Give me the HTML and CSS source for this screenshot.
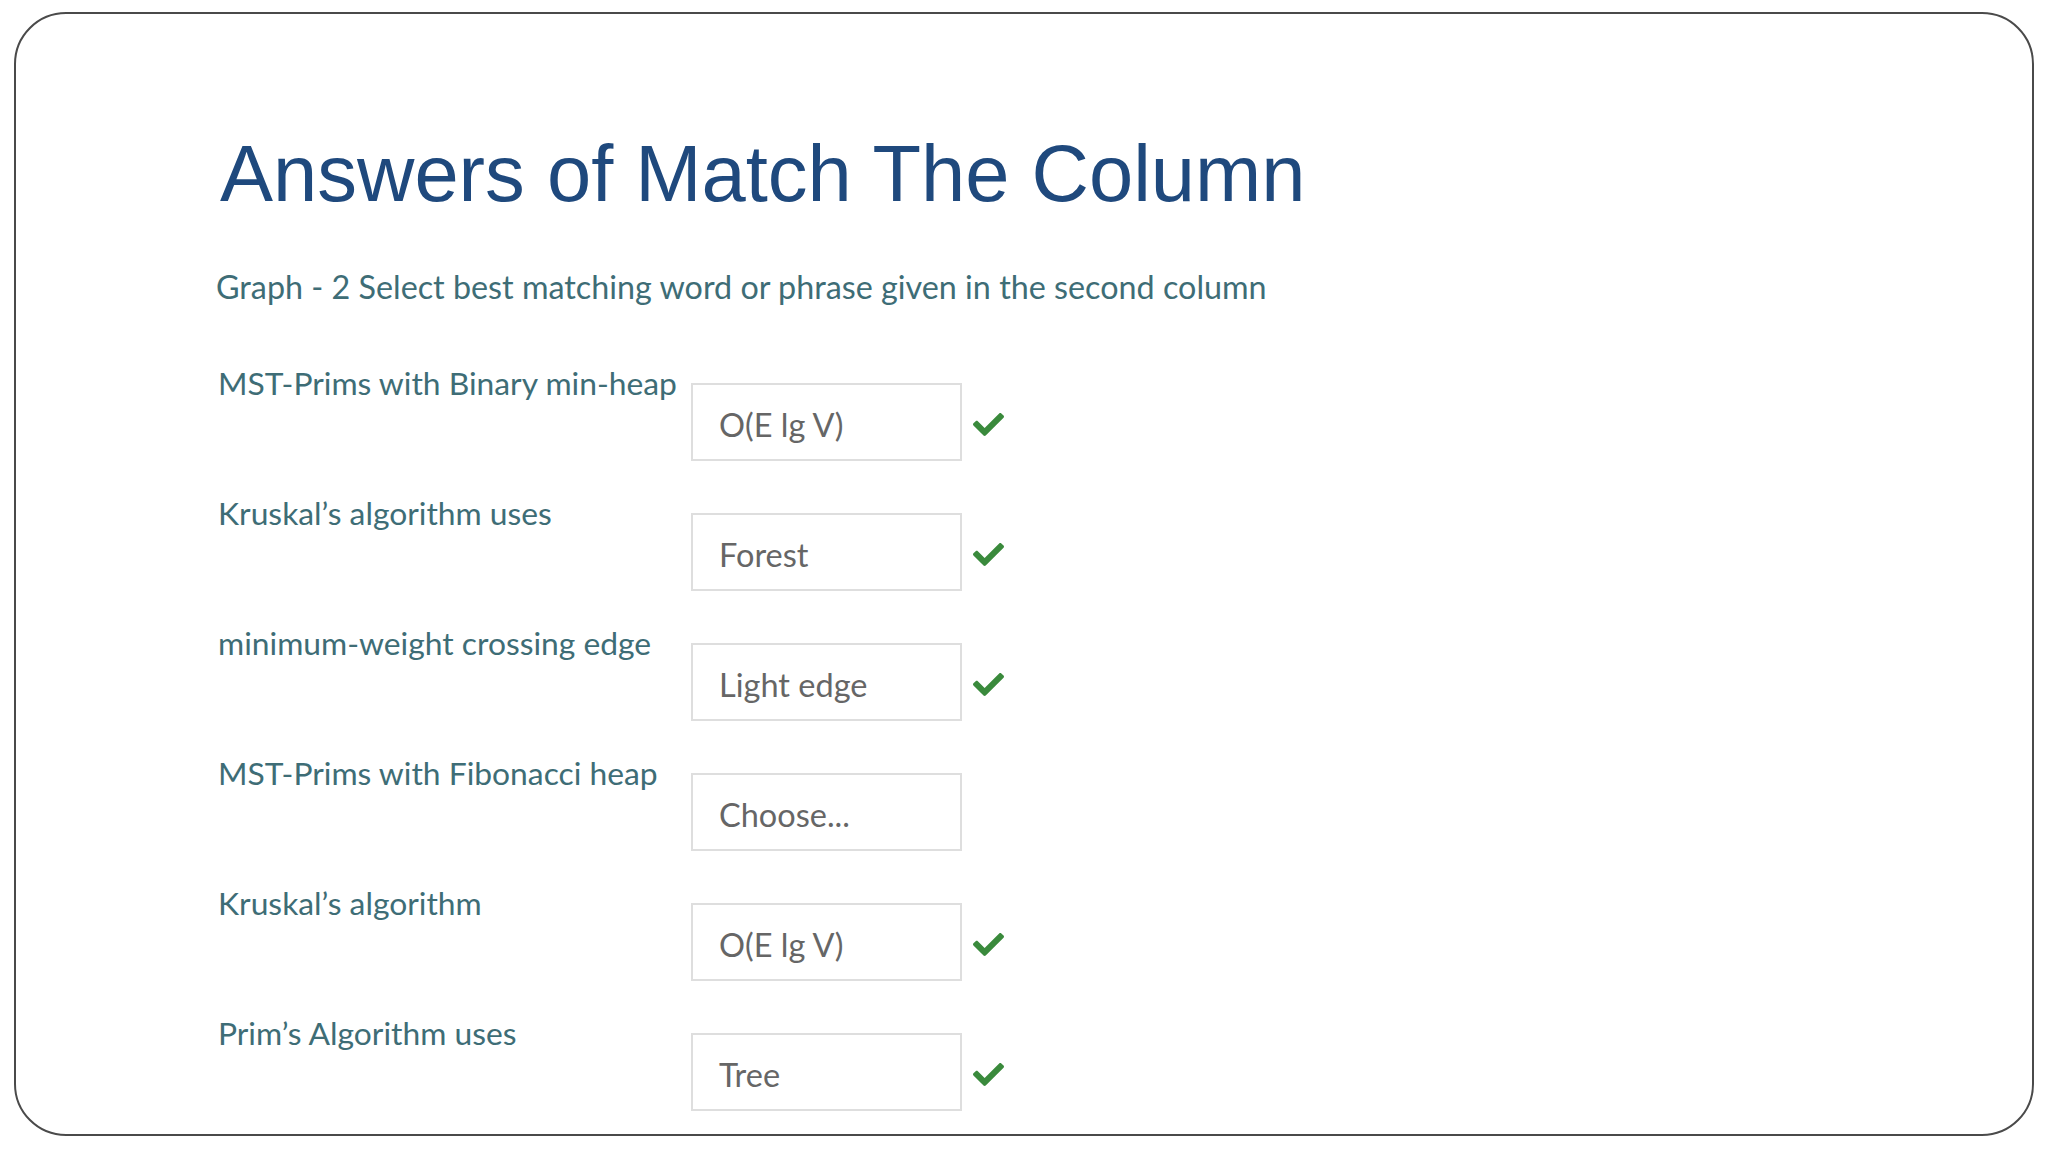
FILE: index.html
```html
<!DOCTYPE html>
<html>
<head>
<meta charset="utf-8" />
<title>Answers of Match The Column</title>
<link rel="stylesheet" href="styles.css">
</head>
<body>
 <div class="slide">
  <h1 class="title">Answers of Match The Column</h1>
  <p class="intro">Graph - 2 Select best matching word or phrase given in the second column</p>
  <div class="answers">
   <div class="row">
    <span class="label">MST-Prims with Binary min-heap</span>
    <span class="box">O(E lg V)</span>
    <svg class="tick" viewBox="0 0 512 512"><path d="M173.9 439.4l-166.4-166.4c-10-10-10-26.2 0-36.2l36.2-36.2c10-10 26.2-10 36.2 0L192 312.7 432.1 72.6c10-10 26.2-10 36.2 0l36.2 36.2c10 10 10 26.2 0 36.2l-294.4 294.4c-10 10-26.2 10-36.2 0z"/></svg>
   </div>
   <div class="row">
    <span class="label">Kruskal’s algorithm uses</span>
    <span class="box">Forest</span>
    <svg class="tick" viewBox="0 0 512 512"><path d="M173.9 439.4l-166.4-166.4c-10-10-10-26.2 0-36.2l36.2-36.2c10-10 26.2-10 36.2 0L192 312.7 432.1 72.6c10-10 26.2-10 36.2 0l36.2 36.2c10 10 10 26.2 0 36.2l-294.4 294.4c-10 10-26.2 10-36.2 0z"/></svg>
   </div>
   <div class="row">
    <span class="label">minimum-weight crossing edge</span>
    <span class="box">Light edge</span>
    <svg class="tick" viewBox="0 0 512 512"><path d="M173.9 439.4l-166.4-166.4c-10-10-10-26.2 0-36.2l36.2-36.2c10-10 26.2-10 36.2 0L192 312.7 432.1 72.6c10-10 26.2-10 36.2 0l36.2 36.2c10 10 10 26.2 0 36.2l-294.4 294.4c-10 10-26.2 10-36.2 0z"/></svg>
   </div>
   <div class="row">
    <span class="label">MST-Prims with Fibonacci heap</span>
    <span class="box">Choose...</span>
   </div>
   <div class="row">
    <span class="label">Kruskal’s algorithm</span>
    <span class="box">O(E lg V)</span>
    <svg class="tick" viewBox="0 0 512 512"><path d="M173.9 439.4l-166.4-166.4c-10-10-10-26.2 0-36.2l36.2-36.2c10-10 26.2-10 36.2 0L192 312.7 432.1 72.6c10-10 26.2-10 36.2 0l36.2 36.2c10 10 10 26.2 0 36.2l-294.4 294.4c-10 10-26.2 10-36.2 0z"/></svg>
   </div>
   <div class="row">
    <span class="label">Prim’s Algorithm uses</span>
    <span class="box">Tree</span>
    <svg class="tick" viewBox="0 0 512 512"><path d="M173.9 439.4l-166.4-166.4c-10-10-10-26.2 0-36.2l36.2-36.2c10-10 26.2-10 36.2 0L192 312.7 432.1 72.6c10-10 26.2-10 36.2 0l36.2 36.2c10 10 10 26.2 0 36.2l-294.4 294.4c-10 10-26.2 10-36.2 0z"/></svg>
   </div>
  </div>
 </div>
</body>
</html>
```

FILE: styles.css
```css
*{
	margin:0;
	padding:0;
}
body{
	background:#fff;
	font-family:Lato, "Open Sans", sans-serif;
}
.slide{
	margin:12px 14px;
	height:1124px;
	border:2px solid #4a4a4a;
	border-radius:52px;
	padding:120px 0 0 204px;
	box-sizing:border-box;
	overflow:hidden;
}
.title{
	font-family:"Liberation Sans", Arial, sans-serif;
	font-weight:normal;
	font-size:79.5px;
	line-height:80px;
	color:#1f497d;
}
.intro{
	margin-top:53px;
	margin-left:-4px;
	font-size:32.3px;
	line-height:40px;
	color:#3e6d76;
}
.answers{
	margin-top:56px;
	margin-left:-2px;
}
.row{
	display:flex;
	align-items:flex-start;
	margin-bottom:32px;
}
.label{
	width:473px;
	font-size:31.8px;
	line-height:40px;
	white-space:nowrap;
	color:#3e6d76;
}
.box{
	display:flex;
	align-items:center;
	box-sizing:border-box;
	width:271px;
	height:78px;
	margin-top:20px;
	padding:4px 0 0 26px;
	border:2px solid #dedede;
	font-size:32.5px;
	color:#666;
}
.tick{
	width:31px;
	height:31px;
	margin:46px 0 0 11px;
	fill:#3a8a3c;
}
```
